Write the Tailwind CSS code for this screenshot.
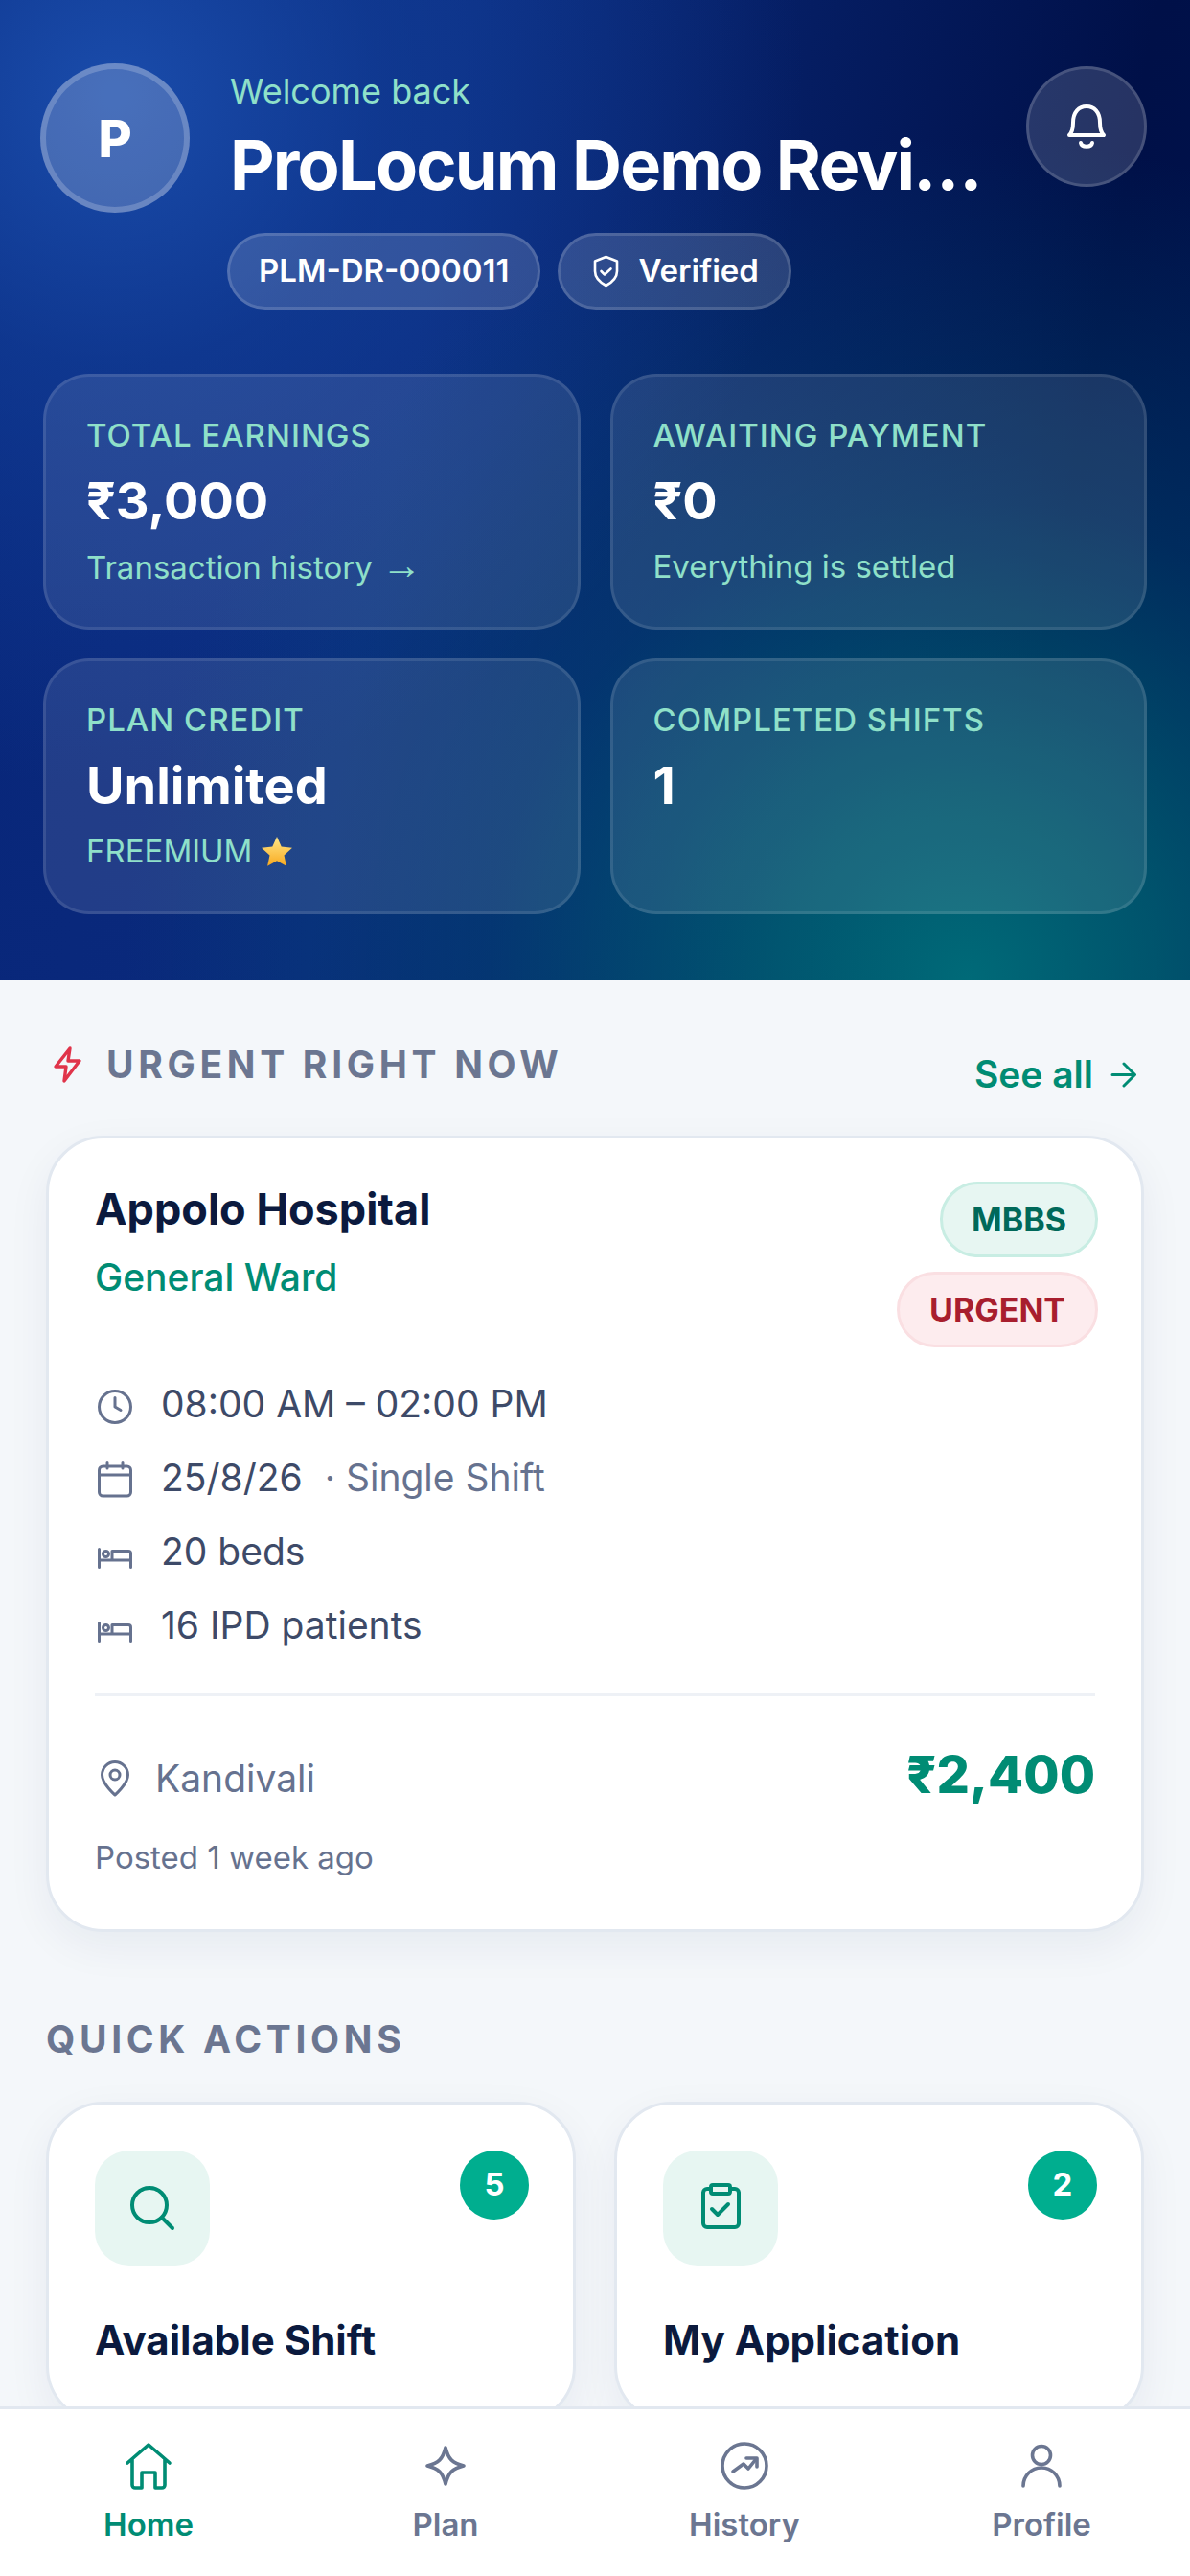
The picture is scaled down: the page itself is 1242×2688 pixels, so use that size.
<!DOCTYPE html>
<html lang="en">
<head>
  <meta charset="UTF-8" />
  <meta name="viewport" content="width=device-width, initial-scale=1.0"/>
  <title>ProLocum Home</title>
  <script src="https://cdn.jsdelivr.net/npm/@tailwindcss/browser@4"></script>
</head>
<body class="font-['Inter',sans-serif] bg-[#f4f7fa]">
<div class="w-[1242px] h-[2688px] flex flex-col overflow-hidden">
  <div class="flex-1 min-h-0 overflow-hidden">

    <!-- Header -->
    <header class="h-[1023px] pl-[42px] pr-[45px] pt-[66px] bg-[radial-gradient(circle_at_1010px_1023px,#006a78_0,rgba(0,106,120,0.75)_200px,rgba(0,80,120,0.42)_500px,rgba(0,60,110,0)_880px),radial-gradient(circle_at_120px_100px,#1a4cab_0,rgba(20,68,160,0.55)_280px,rgba(14,50,140,0)_720px),linear-gradient(100deg,#08267a_0%,#0a2a7c_35%,#001048_85%,#00124c_100%)]">
      <div class="flex items-start">
        <div class="w-[156px] h-[156px] shrink-0 rounded-full bg-white/20 border-[6px] border-white/20 flex items-center justify-center text-white text-[54px] font-extrabold">P</div>
        <div class="ml-[39px] flex-1 min-w-0">
          <p class="pl-[3px] pt-[5px] text-[36px] leading-[48px] text-[#8fe0c9]">Welcome back</p>
          <h1 class="pl-[3px] mt-[9px] whitespace-nowrap text-[72px] leading-[88px] font-bold tracking-[-0.025em] text-white">ProLocum Demo Revi…</h1>
          <div class="mt-[27px] flex gap-[18px]">
            <span class="h-[80px] px-[30px] flex items-center rounded-full bg-white/15 border-[3px] border-white/15 text-[33px] font-semibold text-white">PLM-DR-000011</span>
            <span class="h-[80px] pl-[34px] pr-[31px] flex items-center gap-[20px] rounded-full bg-white/15 border-[3px] border-white/15 text-[33px] font-semibold text-white">
              <svg class="w-[27px] h-[34px]" viewBox="0 0 27 34" fill="none" stroke="currentColor" stroke-width="2.6" stroke-linecap="round" stroke-linejoin="round"><path d="M13.5 2 25 6.500V17c0 7-5 11.500-11.500 15C7 28.500 2 24 2 17V6.500Z"/><path d="m8.500 17 3.500 3.500 6.500-6"/></svg>
              Verified
            </span>
          </div>
        </div>
        <div class="mt-[3px] w-[126px] h-[126px] shrink-0 rounded-full bg-white/15 border-[3px] border-white/15 flex items-center justify-center">
          <svg class="w-[42px] h-[48px]" viewBox="0 0 42 48" fill="none" stroke="white" stroke-width="4" stroke-linecap="round" stroke-linejoin="round"><path d="M3 33c3-3 4-6 4-13C7 9 13 3 21 3s14 6 14 17c0 7 1 10 4 13Z"/><path d="M15 41c1 5 11 5 12 0"/></svg>
        </div>
      </div>

      <div class="mt-[67px] ml-[3px] grid grid-cols-2 gap-x-[31px] gap-y-[30px]">
        <div class="h-[267px] px-[42px] pt-[39px] rounded-[48px] bg-white/10 border-[3px] border-white/10">
          <p class="text-[33px] leading-[44px] font-medium tracking-[0.03em] text-[#8fe0c9]">TOTAL EARNINGS</p>
          <p class="mt-[13px] text-[54px] leading-[68px] font-bold text-white">₹3,000</p>
          <p class="mt-[12px] h-[44px] text-[33px] leading-[44px] text-[#8fe0c9]">Transaction history <span class="font-['Liberation_Sans',sans-serif] text-[42px] leading-none">→</span></p>
        </div>
        <div class="h-[267px] px-[42px] pt-[39px] rounded-[48px] bg-white/10 border-[3px] border-white/10">
          <p class="text-[33px] leading-[44px] font-medium tracking-[0.03em] text-[#8fe0c9]">AWAITING PAYMENT</p>
          <p class="mt-[13px] text-[54px] leading-[68px] font-bold text-white">₹0</p>
          <p class="mt-[12px] text-[33px] leading-[44px] text-[#8fe0c9]">Everything is settled</p>
        </div>
        <div class="h-[267px] px-[42px] pt-[39px] rounded-[48px] bg-white/10 border-[3px] border-white/10">
          <p class="text-[33px] leading-[44px] font-medium tracking-[0.03em] text-[#8fe0c9]">PLAN CREDIT</p>
          <p class="mt-[13px] text-[54px] leading-[68px] font-bold text-white">Unlimited</p>
          <p class="mt-[12px] flex items-center gap-[9px] text-[33px] leading-[44px] text-[#8fe0c9]">FREEMIUM
            <svg class="w-[34px] h-[33px]" viewBox="0 0 34 33"><defs><linearGradient id="star" x1="0" y1="0" x2="0" y2="1"><stop offset="0" stop-color="#ffe88a"/><stop offset="1" stop-color="#f8a91f"/></linearGradient></defs><path d="M17 1l4.700 10.600 11.300 1.200-8.500 7.700 2.400 11.300L17 26.200 7.100 31.800l2.400-11.300L1 12.800l11.300-1.200Z" fill="url(#star)"/></svg>
          </p>
        </div>
        <div class="h-[267px] px-[42px] pt-[39px] rounded-[48px] bg-white/10 border-[3px] border-white/10">
          <p class="text-[33px] leading-[44px] font-medium tracking-[0.03em] text-[#8fe0c9]">COMPLETED SHIFTS</p>
          <p class="mt-[13px] text-[54px] leading-[68px] font-bold text-white">1</p>
        </div>
      </div>
    </header>

    <main class="px-[48px]">
      <!-- Urgent -->
      <div class="mt-[61px] flex items-start justify-between h-[63px]">
        <div class="flex items-center gap-[25px] pl-[6px]">
          <svg class="w-[32px] h-[40px]" viewBox="0 0 32 40" fill="none" stroke="#e0344a" stroke-width="3.400" stroke-linecap="round" stroke-linejoin="round"><path d="M19 3 4 22h11l-2 15 16-21H17Z"/></svg>
          <h2 class="text-[39px] leading-[54px] font-bold tracking-[0.12em] text-[#6b7691]">URGENT RIGHT NOW</h2>
        </div>
        <a class="mt-[10px] mr-[8px] flex items-center gap-[18px] text-[39px] leading-[54px] font-semibold text-[#008c74]">See all
          <svg class="w-[27px] h-[27px]" viewBox="0 0 27 27" fill="none" stroke="currentColor" stroke-width="3" stroke-linecap="round" stroke-linejoin="round"><path d="M2 13.500h23M14 2l11.500 11.500L14 25"/></svg>
        </a>
      </div>

      <section class="mt-[38px] bg-white border-[3px] border-[#e2e8f0] rounded-[60px] pl-[48px] pr-[48px] pt-[44px] pb-[53px] shadow-[0_15px_45px_rgba(20,40,90,0.06)]">
        <div class="flex justify-between items-start">
          <div>
            <h3 class="text-[45px] leading-[60px] font-bold text-[#0b1a3e]">Appolo Hospital</h3>
            <p class="mt-[16px] text-[39px] leading-[50px] font-medium text-[#008c74]">General Ward</p>
          </div>
          <div class="mt-[1px] -mr-[3px] flex flex-col items-end gap-[15px]">
            <span class="h-[79px] px-[30px] flex items-center rounded-full bg-[#e7f6f2] border-[3px] border-[#c8ede3] text-[34px] font-bold text-[#00695a]">MBBS</span>
            <span class="h-[79px] px-[31px] flex items-center rounded-full bg-[#fdecee] border-[3px] border-[#fadfe2] text-[34px] font-bold text-[#a81e2e]">URGENT</span>
          </div>
        </div>

        <ul class="mt-[34px] flex flex-col gap-[27px] text-[39px] leading-[50px] text-[#3d4a68]">
          <li class="flex items-center gap-[30px] pl-[3px]">
            <svg class="w-[36px] h-[36px] mt-[6px] shrink-0" viewBox="0 0 36 36" fill="none" stroke="#66728f" stroke-width="3" stroke-linecap="round" stroke-linejoin="round"><circle cx="18" cy="18" r="16.500"/><path d="M18 8.500V18l6 3.500"/></svg>
            <span>08:00 AM – 02:00 PM</span>
          </li>
          <li class="flex items-center gap-[30px] pl-[3px]">
            <svg class="w-[36px] h-[38px] mt-[4px] shrink-0" viewBox="0 0 36 38" fill="none" stroke="#66728f" stroke-width="3" stroke-linecap="round" stroke-linejoin="round"><rect x="1.500" y="5" width="33" height="31" rx="4"/><path d="M1.500 14h33M10 1.500V7M26 1.500V7"/></svg>
            <span>25/8/26<span class="ml-[23px] text-[#66728f]">· Single Shift</span></span>
          </li>
          <li class="flex items-center gap-[30px] pl-[3px]">
            <svg class="w-[36px] h-[22px] mt-[14px] shrink-0" viewBox="0 0 36 22" fill="none" stroke="#66728f" stroke-width="3" stroke-linecap="round" stroke-linejoin="round"><path d="M1.500 1.500v19M1.500 13h33M34.500 20.500V6a2.500 2.500 0 0 0-2.500-2.500H15V13"/><circle cx="8.500" cy="6.500" r="3"/></svg>
            <span>20 beds</span>
          </li>
          <li class="flex items-center gap-[30px] pl-[3px]">
            <svg class="w-[36px] h-[22px] mt-[14px] shrink-0" viewBox="0 0 36 22" fill="none" stroke="#66728f" stroke-width="3" stroke-linecap="round" stroke-linejoin="round"><path d="M1.500 1.500v19M1.500 13h33M34.500 20.500V6a2.500 2.500 0 0 0-2.500-2.500H15V13"/><circle cx="8.500" cy="6.500" r="3"/></svg>
            <span>16 IPD patients</span>
          </li>
        </ul>

        <div class="mt-[46px] h-[3px] bg-[#eef1f6]"></div>

        <div class="mt-[46px] h-[70px] flex items-center justify-between">
          <div class="flex items-center gap-[27px] pl-[6px] pt-[10px] text-[39px] leading-[50px] text-[#66728f]">
            <svg class="w-[30px] h-[38px]" viewBox="0 0 30 38" fill="none" stroke="currentColor" stroke-width="3" stroke-linecap="round" stroke-linejoin="round"><path d="M15 36S1.500 24.500 1.500 15a13.500 13.500 0 0 1 27 0C28.500 24.500 15 36 15 36Z"/><circle cx="15" cy="15" r="5"/></svg>
            <span>Kandivali</span>
          </div>
          <span class="text-[54px] font-extrabold text-[#008c74]">₹2,400</span>
        </div>
        <p class="mt-[30px] text-[33px] leading-[44px] text-[#66728f]">Posted 1 week ago</p>
      </section>

      <!-- Quick actions -->
      <h2 class="mt-[87px] text-[39px] leading-[50px] font-bold tracking-[0.12em] text-[#6b7691]">QUICK ACTIONS</h2>
      <div class="mt-[40px] grid grid-cols-2 gap-[40px]">
        <div class="relative bg-white border-[3px] border-[#e2e8f0] rounded-[60px] pl-[48px] pt-[48px] pb-[54px] shadow-[0_15px_45px_rgba(20,40,90,0.06)]">
          <div class="w-[120px] h-[120px] rounded-[36px] bg-[#e7f6f2] flex items-center justify-center">
            <svg class="w-[60px] h-[60px]" viewBox="0 0 60 60" fill="none" stroke="#008c74" stroke-width="4" stroke-linecap="round" stroke-linejoin="round"><circle cx="27" cy="27" r="18"/><path d="m40 40 11 11"/></svg>
          </div>
          <h3 class="mt-[48px] text-[42px] leading-[60px] font-bold text-[#0b1a3e]">Available Shift</h3>
          <span class="absolute top-[48px] right-[46px] w-[72px] h-[72px] rounded-full bg-[#00ae8f] flex items-center justify-center text-[33px] font-bold text-white">5</span>
        </div>
        <div class="relative bg-white border-[3px] border-[#e2e8f0] rounded-[60px] pl-[48px] pt-[48px] pb-[54px] shadow-[0_15px_45px_rgba(20,40,90,0.06)]">
          <div class="w-[120px] h-[120px] rounded-[36px] bg-[#e7f6f2] flex items-center justify-center">
            <svg class="w-[60px] h-[60px]" viewBox="0 0 60 60" fill="none" stroke="#008c74" stroke-width="4" stroke-linecap="round" stroke-linejoin="round"><path d="M19 10h-3a4 4 0 0 0-4 4v32a4 4 0 0 0 4 4h29a4 4 0 0 0 4-4V14a4 4 0 0 0-4-4h-3"/><rect x="20" y="6" width="20" height="9" rx="2"/><path d="m21 31 6 6 11-11"/></svg>
          </div>
          <h3 class="mt-[48px] text-[42px] leading-[60px] font-bold text-[#0b1a3e]">My Application</h3>
          <span class="absolute top-[48px] right-[46px] w-[72px] h-[72px] rounded-full bg-[#00ae8f] flex items-center justify-center text-[33px] font-bold text-white">2</span>
        </div>
      </div>
    </main>
  </div>

  <!-- Bottom nav -->
  <nav class="relative h-[177px] shrink-0 bg-white border-t-[3px] border-[#e2e8f0] flex pt-[32px] text-[33px] leading-[46px] font-semibold text-[#6b7691]">
    <a class="flex-1 flex flex-col items-center text-[#008c74]">
      <svg class="w-[54px] h-[54px]" viewBox="0 0 54 54" fill="none" stroke="currentColor" stroke-width="3.600" stroke-linecap="round" stroke-linejoin="round"><path d="M5 24 27 5l22 19M10 20v27a3 3 0 0 0 3 3h7V34h14v16h7a3 3 0 0 0 3-3V20"/></svg>
      <span class="mt-[11px]">Home</span>
    </a>
    <a class="flex-1 flex flex-col items-center">
      <svg class="w-[54px] h-[54px]" viewBox="0 0 54 54" fill="none" stroke="currentColor" stroke-width="3.600" stroke-linecap="round" stroke-linejoin="round"><path d="M27 8c3 12 7 16 19 19-12 3-16 7-19 19-3-12-7-16-19-19 12-3 16-7 19-19Z"/></svg>
      <span class="mt-[11px]">Plan</span>
    </a>
    <a class="flex-1 flex flex-col items-center pl-[2px]">
      <svg class="w-[54px] h-[54px]" viewBox="0 0 54 54" fill="none" stroke="currentColor" stroke-width="3.600" stroke-linecap="round" stroke-linejoin="round"><circle cx="27" cy="27" r="23"/><path d="m15 33 11-8 5 5 8-10"/><path d="M29 19h11v9"/></svg>
      <span class="mt-[11px]">History</span>
    </a>
    <a class="flex-1 flex flex-col items-center">
      <svg class="w-[54px] h-[54px]" viewBox="0 0 54 54" fill="none" stroke="currentColor" stroke-width="3.600" stroke-linecap="round" stroke-linejoin="round"><circle cx="27" cy="16" r="9.500"/><path d="M8 48a19 19 0 0 1 38 0"/></svg>
      <span class="mt-[11px]">Profile</span>
    </a>
  </nav>
</div>
</body>
</html>
